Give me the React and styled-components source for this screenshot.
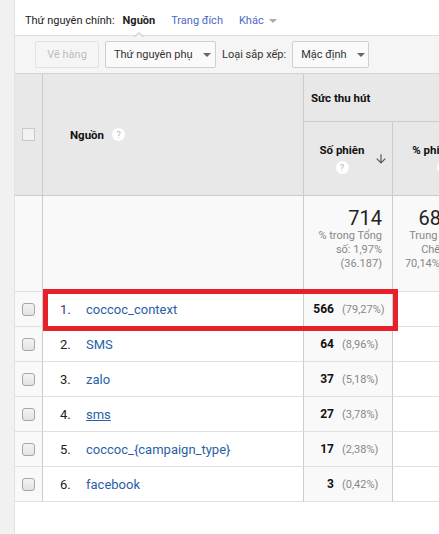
import React from "react";
import styled, { createGlobalStyle } from "styled-components";

const GlobalStyle = createGlobalStyle`
  html, body {
    margin: 0;
    padding: 0;
    background: #ffffff;
  }
  body {
    font-family: Roboto, "Liberation Sans", Arial, sans-serif;
    color: #222222;
  }
`;

const Page = styled.div`
  display: flex;
  width: 439px;
  height: 534px;
  overflow: hidden;
`;

const Sidebar = styled.div`
  flex: 0 0 14px;
  background-color: #f1f1f1;
  border-right: 1px solid #e2e2e2;
`;

const Main = styled.main`
  flex: 1;
  min-width: 0;
  display: flex;
  flex-direction: column;
  overflow: hidden;
`;

const TabBar = styled.div`
  display: flex;
  align-items: center;
  height: 36px;
  padding: 6px 0 0 10px;
  box-sizing: border-box;
  border-bottom: 1px solid #dedede;
  font-size: 11px;
  white-space: nowrap;
`;

const TabLabel = styled.span`
  color: #222;
  margin-right: 8px;
`;

const Tab = styled.span`
  position: relative;
  margin-right: 16px;
  color: ${(p) => (p.$active ? "#222" : "#4d68c9")};
  font-weight: ${(p) => (p.$active ? 700 : 400)};
  display: inline-flex;
  align-items: center;
  gap: 5px;

  ${(p) =>
    p.$active &&
    `
    &::before {
      content: "";
      position: absolute;
      left: 50%;
      bottom: -10px;
      margin-left: -6px;
      border: 6px solid transparent;
      border-bottom: 5px solid #d6d6d6;
      border-top: 0;
    }
    &::after {
      content: "";
      position: absolute;
      left: 50%;
      bottom: -11px;
      margin-left: -5px;
      border: 5px solid transparent;
      border-bottom: 4px solid #f5f5f5;
      border-top: 0;
    }
  `}
`;

const Caret = styled.span`
  display: inline-block;
  width: 0;
  height: 0;
  border-left: 4px solid transparent;
  border-right: 4px solid transparent;
  border-top: 4px solid ${(p) => p.$color || "#666"};
`;

const Toolbar = styled.div`
  display: flex;
  align-items: center;
  gap: 6px;
  height: 38px;
  box-sizing: border-box;
  padding-left: 20px;
  background-color: #f5f5f5;
  border-bottom: 1px solid #d4d4d4;
  font-size: 11px;
  white-space: nowrap;
`;

const Button = styled.button`
  display: inline-flex;
  align-items: center;
  justify-content: ${(p) => (p.disabled ? "center" : "space-between")};
  gap: 10px;
  height: 27px;
  padding: 0 8px;
  box-sizing: border-box;
  width: ${(p) => p.$width}px;
  font-family: inherit;
  font-size: 11px;
  color: ${(p) => (p.disabled ? "#bdbdbd" : "#333")};
  background-color: ${(p) => (p.disabled ? "#f5f5f5" : "#fafafa")};
  border: 1px solid ${(p) => (p.disabled ? "#e3e3e3" : "#cfcfcf")};
  border-radius: 2px;
`;

const ToolbarLabel = styled.span`
  color: #333;
`;

const TableWrap = styled.div`
  position: relative;
`;

const Grid = styled.div`
  display: grid;
  width: 478px;
  grid-template-columns: 28px 261px 89px 100px;
  grid-template-rows: 48px 74px 96px repeat(6, 35px);
`;

const Cell = styled.div`
  box-sizing: border-box;
  border-right: 1px solid #cccccc;
  border-bottom: 1px solid ${(p) => (p.$head ? "#cccccc" : "#e0e0e0")};
  background-color: ${(p) => p.$bg || "#ffffff"};
  display: flex;
  align-items: center;
  min-width: 0;
  overflow: hidden;
  white-space: nowrap;
`;

const HeadCell = styled(Cell).attrs({ $head: true, $bg: "#e8e8e8" })`
  font-size: 11.5px;
  font-weight: 700;
  color: #111;
`;

const CheckHead = styled(HeadCell)`
  grid-row: 1 / span 2;
  justify-content: center;
`;

const SourceHead = styled(HeadCell)`
  grid-row: 1 / span 2;
  padding-left: 27px;
  gap: 8px;
`;

const GroupHead = styled(HeadCell)`
  grid-column: 3 / span 2;
  padding-left: 7px;
`;

const MetricHead = styled(HeadCell)`
  padding: 0 4px 0 6px;
`;

const MetricLabel = styled.div`
  flex: 1;
  display: flex;
  flex-direction: column;
  align-items: center;
  gap: 4px;
`;

const HeadBox = styled.span`
  width: 13px;
  height: 13px;
  box-sizing: border-box;
  border: 1px solid #c9c9c9;
  background-color: #f2f2f2;
`;

const Help = styled.span`
  display: inline-flex;
  align-items: center;
  justify-content: center;
  width: 13px;
  height: 13px;
  border-radius: 50%;
  background-color: #ffffff;
  color: #b5b5b5;
  font-size: 9px;
  font-weight: 400;
`;

const TotalCell = styled(Cell)`
  flex-direction: column;
  align-items: flex-end;
  justify-content: flex-start;
  padding: 11px 10px 0 0;
  text-align: right;
`;

const TotalValue = styled.div`
  font-size: 20px;
  line-height: 22px;
  color: #222;
`;

const TotalNote = styled.div`
  font-size: 11px;
  line-height: 14px;
  color: #888;
`;

const CheckCell = styled(Cell)`
  justify-content: center;
`;

const RowBox = styled.span`
  width: 13px;
  height: 13px;
  box-sizing: border-box;
  border: 1px solid #a6a6a6;
  border-radius: 3px;
  background: linear-gradient(#f4f4f4, #e2e2e2);
`;

const SourceCell = styled(Cell)`
  padding-left: 17px;
  font-size: 13px;
`;

const Index = styled.span`
  width: 26px;
  color: ${(p) => (p.$visited ? "#3f3489" : "#222")};
`;

const SourceLink = styled.a`
  color: #2a5fa8;
  text-decoration: ${(p) => (p.$hover ? "underline" : "none")};
`;

const ValueCell = styled(Cell)``;

const Value = styled.span`
  width: 30px;
  text-align: right;
  font-size: 12px;
  font-weight: 700;
  color: #111;
`;

const Share = styled.span`
  margin-left: 8px;
  font-size: 11px;
  color: #888;
`;

const Highlight = styled.div`
  position: absolute;
  left: 28px;
  top: 215px;
  width: 355px;
  height: 42px;
  box-sizing: border-box;
  border: 5px solid #e8202a;
  pointer-events: none;
`;

const SortArrow = () => (
  <svg width="14" height="14" viewBox="0 0 24 24" fill="#555">
    <path d="M20 12l-1.41-1.41L13 16.17V4h-2v12.17l-5.58-5.59L4 12l8 8 8-8z" />
  </svg>
);

const rows = [
  { name: "coccoc_context", value: 566, share: "79,27%" },
  { name: "SMS", value: 64, share: "8,96%" },
  { name: "zalo", value: 37, share: "5,18%" },
  { name: "sms", value: 27, share: "3,78%", hover: true },
  { name: "coccoc_{campaign_type}", value: 17, share: "2,38%" },
  { name: "facebook", value: 3, share: "0,42%" },
];

const App = () => {
  return (
    <>
      <GlobalStyle />
      <Page>
        <Sidebar />
        <Main>
          <TabBar>
            <TabLabel>Thứ nguyên chính:</TabLabel>
            <Tab $active>Nguồn</Tab>
            <Tab>Trang đích</Tab>
            <Tab>
              Khác <Caret $color="#aaa" />
            </Tab>
          </TabBar>

          <Toolbar>
            <Button disabled $width={64}>
              Vẽ hàng
            </Button>
            <Button $width={111}>
              Thứ nguyên phụ <Caret />
            </Button>
            <ToolbarLabel>Loại sắp xếp:</ToolbarLabel>
            <Button $width={77}>
              Mặc định <Caret />
            </Button>
          </Toolbar>

          <TableWrap>
            <Grid>
              <CheckHead>
                <HeadBox />
              </CheckHead>
              <SourceHead>
                Nguồn <Help>?</Help>
              </SourceHead>
              <GroupHead>Sức thu hút</GroupHead>
              <MetricHead>
                <MetricLabel>
                  Số phiên
                  <Help>?</Help>
                </MetricLabel>
                <SortArrow />
              </MetricHead>
              <MetricHead>
                <MetricLabel>
                  % phiên mới
                  <Help>?</Help>
                </MetricLabel>
              </MetricHead>

              <Cell $bg="#f9f9f9" />
              <Cell $bg="#f9f9f9" />
              <TotalCell $bg="#f9f9f9">
                <TotalValue>714</TotalValue>
                <TotalNote>
                  % trong Tổng
                  <br />
                  số: 1,97%
                  <br />
                  (36.187)
                </TotalNote>
              </TotalCell>
              <TotalCell $bg="#f9f9f9">
                <TotalValue>68,21%</TotalValue>
                <TotalNote>
                  Trung bình cho
                  <br />
                  Chế độ xem:
                  <br />
                  70,14% (-2,75%)
                </TotalNote>
              </TotalCell>

              {rows.map((row, i) => (
                <React.Fragment key={row.name}>
                  <CheckCell $bg="#f9f9f9">
                    <RowBox />
                  </CheckCell>
                  <SourceCell>
                    <Index $visited={i === 0}>{i + 1}.</Index>
                    <SourceLink $hover={row.hover}>{row.name}</SourceLink>
                  </SourceCell>
                  <ValueCell $bg="#f9f9f9">
                    <Value>{row.value}</Value>
                    <Share>({row.share})</Share>
                  </ValueCell>
                  <Cell />
                </React.Fragment>
              ))}
            </Grid>
            <Highlight />
          </TableWrap>
        </Main>
      </Page>
    </>
  );
};

export default App;
